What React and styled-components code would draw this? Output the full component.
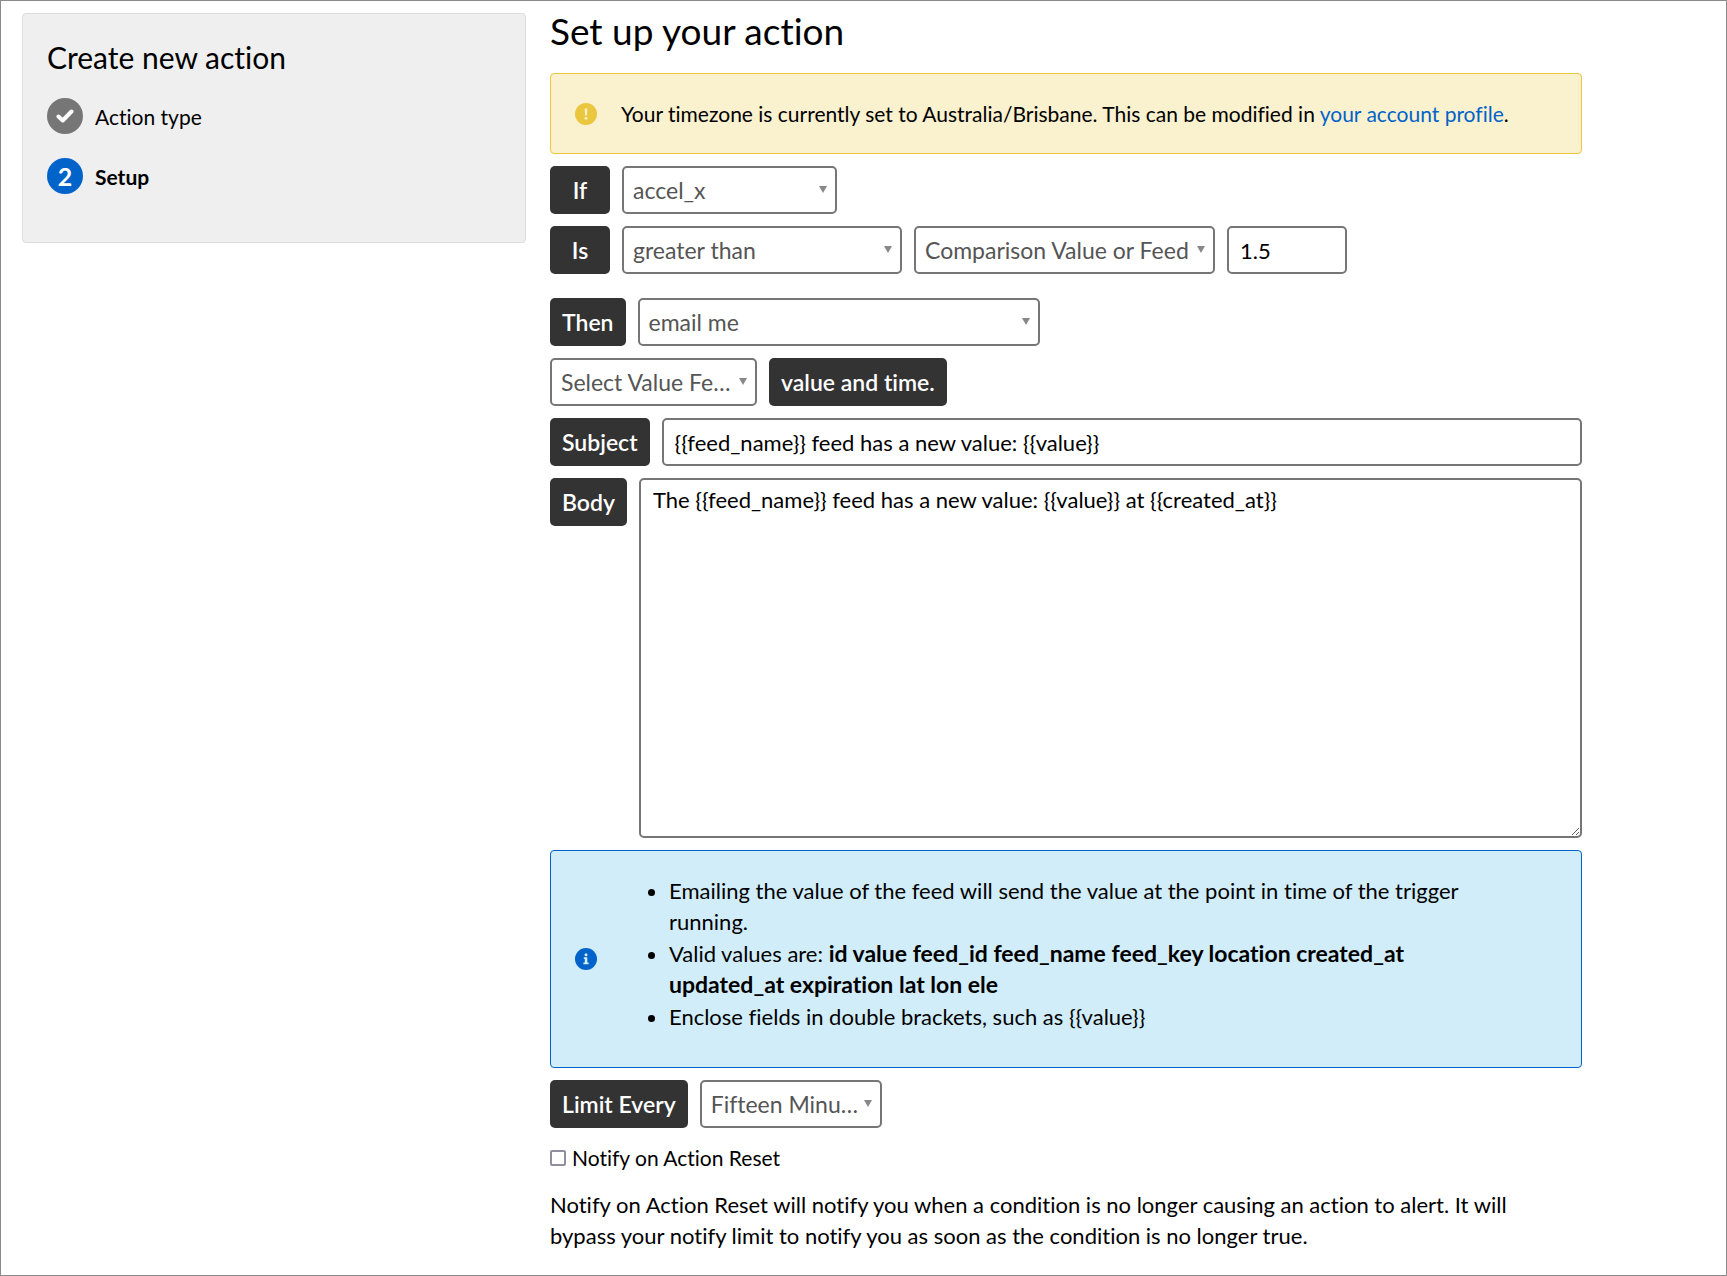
import React, { useState } from 'react'

import styled, { createGlobalStyle } from 'styled-components'

const GlobalStyle = createGlobalStyle`
    * {
        box-sizing: border-box;
    }

    body {
        margin: 0;
        background: #fff;
        color: #000;
        font-family: Lato, "Liberation Sans", sans-serif;
        font-size: 22px;
        font-variant-ligatures: none;
        line-height: 31px;
    }

    input, select, textarea {
        font-family: inherit;
        font-size: 22px;
        font-variant-ligatures: none;
    }
`

const Page = styled.div`
    display: grid;
    grid-template-columns: 21fr 43fr 5fr;
    column-gap: 24px;
    align-items: start;
    min-height: 100vh;
    padding: 12px 0 16px 21px;
    border: 1px solid #8a8a8a;
`

const Sidebar = styled.aside`
    padding: 23px 24px 48px;
    background: #efefef;
    border: 1px solid #dcdcdc;
    border-radius: 4px;
`

const SidebarTitle = styled.h2`
    margin: 0 0 21px;
    font-size: 30px;
    font-weight: 400;
    line-height: 40px;
`

const Steps = styled.ol`
    display: flex;
    flex-direction: column;
    gap: 24px;
    margin: 0;
    padding: 0;
    list-style: none;
`

const Step = styled.li`
    display: flex;
    align-items: center;
    gap: 12px;
    font-size: 21px;
    font-weight: ${props => (props.$current ? 700 : 400)};
`

const StepBadge = styled.span`
    display: flex;
    align-items: center;
    justify-content: center;
    width: 36px;
    height: 36px;
    border-radius: 50%;
    background: ${props => (props.$current ? '#0063ca' : '#767676')};
    color: #fff;
    font-size: 25px;
    font-weight: 700;
`

const Main = styled.main`
    min-width: 0;
`

const Title = styled.h1`
    margin: 0 0 24px;
    font-size: 37px;
    font-weight: 400;
    line-height: 36px;
`

const Form = styled.form`
    display: flex;
    flex-direction: column;
    gap: 12px;
`

const Notice = styled.div`
    display: flex;
    align-items: center;
    gap: 24px;
    padding: 24px;
    border: 1px solid ${props => (props.$info ? '#0063ca' : '#ebc740')};
    border-radius: 4px;
    background: ${props => (props.$info ? '#d1edf9' : '#faf1cf')};

    svg {
        flex: none;
    }
`

const NoticeText = styled.p`
    margin: 0;
    font-size: 21px;
`

const Link = styled.a`
    color: #0063ca;
    text-decoration: none;
`

const Hints = styled.ul`
    margin: 0;
    padding: 0 72px 10px 48px;

    li {
        margin-bottom: 1px;
    }

    b {
        font-size: 23px;
    }
`

const Row = styled.div`
    display: flex;
    align-items: flex-start;
    flex-wrap: ${props => (props.$nowrap ? 'nowrap' : 'wrap')};
    gap: 12px;
    margin-bottom: ${props => (props.$last ? '12px' : '0')};
`

const Tag = styled.label`
    flex: none;
    min-width: 60px;
    padding: 0 12px;
    border-radius: 5px;
    background: #333;
    color: #fff;
    font-size: 23px;
    font-weight: 600;
    line-height: 48px;
    text-align: center;
`

const SelectBox = styled.div`
    position: relative;
    width: ${props => props.$width};

    &::after {
        content: '';
        position: absolute;
        top: 20px;
        right: 10px;
        border: 4px solid transparent;
        border-top: 7px solid #888;
        border-bottom: 0;
        pointer-events: none;
    }
`

const Select = styled.select`
    display: block;
    width: 100%;
    height: 48px;
    padding: 0 20px 0 9px;
    border: 2px solid #767676;
    border-radius: 5px;
    background: #fff;
    color: #555;
    font-size: 23px;
    text-overflow: ellipsis;
    appearance: none;
`

const TextInput = styled.input`
    flex: ${props => (props.$width ? 'none' : '1')};
    width: ${props => props.$width || 'auto'};
    min-width: 0;
    height: 48px;
    padding: 0 11px;
    border: 2px solid #767676;
    border-radius: 5px;
    color: #000;
`

const TextArea = styled.textarea`
    flex: 1;
    min-width: 0;
    height: 360px;
    padding: 4px 12px;
    border: 2px solid #767676;
    border-radius: 5px;
    color: #000;
    line-height: 31px;
`

const CheckLabel = styled.label`
    display: flex;
    align-items: center;
    gap: 6px;
    margin-top: 2px;
    font-size: 21px;
`

const Checkbox = styled.input`
    width: 16px;
    height: 16px;
    margin: 0;
    border: 2px solid #8f8f9d;
    border-radius: 2px;
    background: #fff;
    appearance: none;

    &:checked {
        background: #0063ca;
    }
`

const HelpText = styled.p`
    margin: 4px 0 0;
    padding-right: 24px;
`

const CheckIcon = () => (
    <svg width="18" height="14" viewBox="0 0 18 14" aria-hidden="true">
        <path d="M2.5 7.5l4.2 4L15.5 2.5" fill="none" stroke="#fff" strokeWidth="4" strokeLinecap="round" strokeLinejoin="round" />
    </svg>
)

const WarningIcon = () => (
    <svg width="22" height="22" viewBox="0 0 22 22" aria-hidden="true">
        <circle cx="11" cy="11" r="11" fill="#ebc740" />
        <path d="M9.7 5.5h2.6l-.4 7h-1.8z" fill="#faf1cf" />
        <circle cx="11" cy="15.3" r="1.4" fill="#faf1cf" />
    </svg>
)

const InfoIcon = () => (
    <svg width="22" height="22" viewBox="0 0 22 22" aria-hidden="true">
        <circle cx="11" cy="11" r="11" fill="#0063ca" />
        <circle cx="11" cy="6.8" r="1.5" fill="#d1edf9" />
        <path d="M8.8 9.3h3.5v5.2h1.3v1.8H8.4v-1.8h1.4v-3.4h-1z" fill="#d1edf9" />
    </svg>
)

const Dropdown = ({ id, width, label, options }) => (
    <SelectBox $width={width}>
        <Select id={id} aria-label={label}>
            {options.map(option => <option key={option}>{option}</option>)}
        </Select>
    </SelectBox>
)

const App = () => {
    const [value, setValue] = useState('1.5')
    const [subject, setSubject] = useState('{{feed_name}} feed has a new value: {{value}}')
    const [body, setBody] = useState('The {{feed_name}} feed has a new value: {{value}} at {{created_at}}')
    const [notify, setNotify] = useState(false)

    return (
        <>
            <GlobalStyle />
            <Page>
                <Sidebar>
                    <SidebarTitle>Create new action</SidebarTitle>
                    <Steps>
                        <Step>
                            <StepBadge><CheckIcon /></StepBadge>
                            Action type
                        </Step>
                        <Step $current aria-current="step">
                            <StepBadge $current>2</StepBadge>
                            Setup
                        </Step>
                    </Steps>
                </Sidebar>
                <Main>
                    <Title>Set up your action</Title>
                    <Form>
                        <Notice>
                            <WarningIcon />
                            <NoticeText>
                                Your timezone is currently set to Australia/Brisbane. This can be modified in <Link href="#profile">your account profile</Link>.
                            </NoticeText>
                        </Notice>
                        <Row>
                            <Tag htmlFor="feed">If</Tag>
                            <Dropdown id="feed" width="215px" options={['accel_x']} />
                        </Row>
                        <Row $last>
                            <Tag htmlFor="operator">Is</Tag>
                            <Dropdown id="operator" width="280px" options={['greater than']} />
                            <Dropdown id="comparison" width="301px" label="Comparison" options={['Comparison Value or Feed']} />
                            <TextInput
                                $width="120px"
                                aria-label="Comparison value"
                                value={value}
                                onChange={e => setValue(e.target.value)}
                            />
                        </Row>
                        <Row>
                            <Tag htmlFor="then">Then</Tag>
                            <Dropdown id="then" width="402px" options={['email me']} />
                        </Row>
                        <Row>
                            <Dropdown id="valueFeed" width="207px" options={['Select Value Feed']} />
                            <Tag htmlFor="valueFeed">value and time.</Tag>
                        </Row>
                        <Row $nowrap>
                            <Tag htmlFor="subject">Subject</Tag>
                            <TextInput id="subject" value={subject} onChange={e => setSubject(e.target.value)} />
                        </Row>
                        <Row $nowrap>
                            <Tag htmlFor="body">Body</Tag>
                            <TextArea id="body" value={body} onChange={e => setBody(e.target.value)} />
                        </Row>
                        <Notice $info>
                            <InfoIcon />
                            <Hints>
                                <li>Emailing the value of the feed will send the value at the point in time of the trigger running.</li>
                                <li>
                                    Valid values are: <b>id value feed_id feed_name feed_key location created_at updated_at expiration lat lon ele</b>
                                </li>
                                <li>Enclose fields in double brackets, such as {'{{value}}'}</li>
                            </Hints>
                        </Notice>
                        <Row>
                            <Tag htmlFor="limit">Limit Every</Tag>
                            <Dropdown id="limit" width="182px" options={['Fifteen Minutes']} />
                        </Row>
                        <CheckLabel>
                            <Checkbox type="checkbox" checked={notify} onChange={e => setNotify(e.target.checked)} />
                            Notify on Action Reset
                        </CheckLabel>
                        <HelpText>
                            Notify on Action Reset will notify you when a condition is no longer causing an action to alert. It will bypass your notify limit to notify you as soon as the condition is no longer true.
                        </HelpText>
                    </Form>
                </Main>
            </Page>
        </>
    )
}

export default App
